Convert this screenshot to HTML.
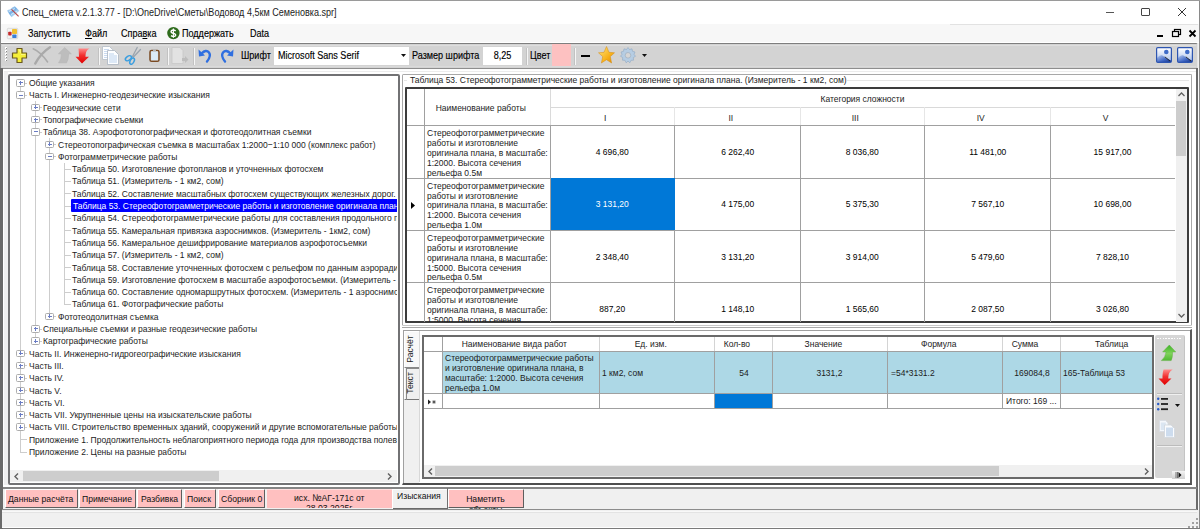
<!DOCTYPE html><html><head><meta charset="utf-8"><style>
*{margin:0;padding:0;box-sizing:border-box}
html,body{width:1200px;height:529px;overflow:hidden;background:#f0f0f0;font-family:"Liberation Sans",sans-serif;color:#1c1c1c}
div{position:absolute}
.t{white-space:nowrap;line-height:10px;height:10px;font-size:9.6px;transform:translateY(-4.8px) scaleX(.885);transform-origin:0 50%}
.t.c{transform-origin:50% 50%}
.s{white-space:nowrap;line-height:12px;height:12px;font-size:10.3px;transform:translateY(-6px) scaleX(.879);transform-origin:0 50%;color:#000!important;-webkit-text-stroke:.15px #000}
.s.c{transform-origin:50% 50%}
.ttl{-webkit-text-stroke:0;color:#222!important}
.c{text-align:center}
svg{position:absolute;overflow:visible}
</style></head><body>
<div style="left:0px;top:0px;width:1200px;height:24px;background:#fff"></div>
<div style="left:0px;top:24px;width:1200px;height:19px;background:#f7f7f7;border-bottom:1.5px solid #fff"></div>
<div style="left:950px;top:24px;width:248px;height:1px;background:#e2e2e2"></div>
<svg style="left:6px;top:5px" width="14" height="13" viewBox="0 0 14 13">
<defs><linearGradient id="tg" x1="0" y1="0" x2="1" y2="1"><stop offset="0" stop-color="#e4f0fb"/><stop offset=".45" stop-color="#5aa0e0"/><stop offset=".7" stop-color="#a8d4f4"/><stop offset="1" stop-color="#4a90d8"/></linearGradient></defs>
<path d="M1 5.5 Q3 4 4 4.5 Q6 2 8.8 1.2 Q10 2.5 13.5 6 Q11 7 10.5 8.5 Q8 10 5.5 12.2 Q3 9 1 5.5Z" fill="url(#tg)" opacity=".85"/>
<path d="M3 6.5Q6 5 9 3.5M5 9.5Q8 8 11 6" stroke="#f4faff" stroke-width=".9" fill="none" opacity=".8"/>
<path d="M5.5 4.3L12.6 11.4" stroke="#b84a4a" stroke-width="1.2"/></svg>
<div class="s ttl" style="left:21.5px;top:12.5px;">Спец_смета v.2.1.3.77 - [D:\OneDrive\Сметы\Водовод 4,5км Семеновка.spr]</div>
<div style="left:1106px;top:12px;width:8px;height:1px;background:#555"></div>
<div style="left:1141px;top:8px;width:9px;height:8px;border:1px solid #444;border-radius:1px"></div>
<svg style="left:1178px;top:8px" width="8" height="8" viewBox="0 0 8 8"><path d="M0 0L8 8M8 0L0 8" stroke="#333" stroke-width="1"/></svg>
<svg style="left:7px;top:28px" width="11" height="11" viewBox="0 0 11 11">
<rect x=".3" y=".3" width="10.4" height="10.4" rx="1" fill="#f2f2f2" stroke="#c8c8c8" stroke-width=".6"/>
<rect x="1.2" y="3.8" width="3.4" height="3.8" rx=".8" fill="#c42a2a"/>
<rect x="5" y="1" width="5" height="5" rx=".8" fill="#f0c030"/>
<rect x="5.3" y="6.6" width="4.2" height="3.4" rx=".6" fill="#3a7fd8"/></svg>
<div class="s" style="left:27.5px;top:33.5px;color:#1a1a1a">Запустить</div>
<div class="s" style="left:84.5px;top:33.5px;color:#1a1a1a"><u style="text-decoration-thickness:1px;text-underline-offset:1px">Ф</u>айл</div>
<div class="s" style="left:121px;top:33.5px;color:#1a1a1a">Спра<u style="text-decoration-thickness:1px;text-underline-offset:1px">в</u>ка</div>
<svg style="left:167px;top:27px" width="13" height="13" viewBox="0 0 13 13">
<circle cx="6.4" cy="6.1" r="6.2" fill="#2e6b1c"/>
<path d="M8.7 3.9Q6.4 2.4 4.5 3.6Q3.4 5 5.4 6L7.4 6.6Q9.3 7.6 8.2 9Q6.3 10.3 4 8.7" fill="none" stroke="#fff" stroke-width="1.5"/>
<path d="M6.4 1.6V10.8" stroke="#fff" stroke-width="1.1"/></svg>
<div class="s" style="left:182px;top:33.5px;color:#1a1a1a">Поддержать</div>
<div class="s" style="left:250px;top:33.5px;color:#1a1a1a">Data</div>
<div style="left:1157px;top:35px;width:6px;height:2px;background:#000"></div>
<svg style="left:1172px;top:29px" width="9" height="8" viewBox="0 0 9 8"><rect x="2.5" y=".5" width="6" height="5" fill="none" stroke="#000" stroke-width="1.2"/><rect x=".5" y="2.5" width="6" height="5" fill="#f2f2f2" stroke="#000" stroke-width="1.2"/></svg>
<svg style="left:1189px;top:30px" width="7" height="7" viewBox="0 0 7 7"><path d="M0.5 0.5L6.5 6.5M6.5 0.5L0.5 6.5" stroke="#000" stroke-width="1.8"/></svg>
<div style="left:1px;top:43px;width:1197px;height:26px;background:#d3d3d3;border-top:1px solid #7e7e7e;border-bottom:1px solid #8e8e8e;border-right:1px solid #e6e6e6;border-radius:0 2px 2px 0"></div>
<div style="left:2px;top:44.5px;width:1194px;height:1px;background:#dedede"></div>
<div style="left:2px;top:66px;width:1194px;height:1px;background:#dadada"></div>
<div style="left:2px;top:69.2px;width:1194px;height:2px;background:#fcfcfc"></div>
<div style="left:5px;top:47px;width:2px;height:2px;background:#fff"></div>
<div style="left:6px;top:48px;width:1px;height:1px;background:#8a8a8a"></div>
<div style="left:5px;top:50px;width:2px;height:2px;background:#fff"></div>
<div style="left:6px;top:51px;width:1px;height:1px;background:#8a8a8a"></div>
<div style="left:5px;top:53px;width:2px;height:2px;background:#fff"></div>
<div style="left:6px;top:54px;width:1px;height:1px;background:#8a8a8a"></div>
<div style="left:5px;top:56px;width:2px;height:2px;background:#fff"></div>
<div style="left:6px;top:57px;width:1px;height:1px;background:#8a8a8a"></div>
<div style="left:5px;top:59px;width:2px;height:2px;background:#fff"></div>
<div style="left:6px;top:60px;width:1px;height:1px;background:#8a8a8a"></div>
<svg style="left:12px;top:48px" width="15" height="15" viewBox="0 0 15 15">
<path d="M5 0.5H10V5H14.5V10H10V14.5H5V10H0.5V5H5Z" fill="#f5ef3a" stroke="#6b5a1e" stroke-width="1.2" stroke-linejoin="round"/>
<path d="M6 1.5H9V6H13.5V7H9V6Z" fill="#fffbb0" opacity=".6"/></svg>
<svg style="left:32px;top:46px" width="19" height="19" viewBox="0 0 19 19">
<path d="M1.2 2.8Q8.5 6 15.6 16" stroke="#ababab" stroke-width="1.5" fill="none" stroke-linecap="round"/>
<path d="M18 1.3Q9 7 3.2 17.6" stroke="#a9a9a9" stroke-width="2.3" fill="none" stroke-linecap="round"/></svg>
<svg style="left:58px;top:47px" width="14" height="17" viewBox="0 0 14 17">
<path d="M6.7 .6L13.3 6.8H10.6Q10.7 12.5 8.6 15.8H.6Q3.6 12 3.4 6.8H.4Z" fill="#bdbdbd" stroke="#b2b2b2" stroke-width=".5"/></svg>
<svg style="left:75px;top:48px" width="15" height="16" viewBox="0 0 15 16">
<defs><linearGradient id="rg" x1="0" y1="0" x2="0" y2="1"><stop offset="0" stop-color="#ff8c8c"/><stop offset=".45" stop-color="#f23030"/><stop offset="1" stop-color="#e00000"/></linearGradient></defs>
<path d="M3.5 .5H14.5Q10.3 2.5 10.5 8.8H14L7 15.5L.5 8.8H4Q3.8 3 3.5 .5Z" fill="url(#rg)"/></svg>
<div style="left:98px;top:48px;width:1px;height:17px;background:#c2c2c2"></div>
<div style="left:99px;top:48px;width:1px;height:17px;background:#f6f6f6"></div>
<div style="left:167px;top:48px;width:1px;height:17px;background:#c2c2c2"></div>
<div style="left:168px;top:48px;width:1px;height:17px;background:#f6f6f6"></div>
<div style="left:193px;top:48px;width:1px;height:17px;background:#c2c2c2"></div>
<div style="left:194px;top:48px;width:1px;height:17px;background:#f6f6f6"></div>
<div style="left:526px;top:48px;width:1px;height:17px;background:#c2c2c2"></div>
<div style="left:527px;top:48px;width:1px;height:17px;background:#f6f6f6"></div>
<div style="left:574px;top:48px;width:1px;height:17px;background:#c2c2c2"></div>
<div style="left:575px;top:48px;width:1px;height:17px;background:#f6f6f6"></div>
<svg style="left:102px;top:46px" width="17" height="19" viewBox="0 0 17 19">
<path d="M.5 .5H7.5L10.5 3.5V13.5H.5Z" fill="#fdfeff" stroke="#b4bcc6" stroke-width=".8"/>
<path d="M2 3.5H7M2 5.5H8.5M2 7.5H8.5M2 9.5H8.5M2 11.5H8.5" stroke="#c9daf0" stroke-width="1"/>
<path d="M5.5 4.5H12.5L16.5 8.5V18.5H5.5Z" fill="#fdfeff" stroke="#aab4c0" stroke-width=".8"/>
<path d="M7 8H12M7 10H15M7 12H15M7 14H15M7 16H15" stroke="#bcd2ee" stroke-width="1.1"/></svg>
<svg style="left:123px;top:46px" width="19" height="20" viewBox="0 0 19 20">
<path d="M9.5 10.5L14.2 1.5M10.2 11.2L17.5 3.5" stroke="#9aa4ae" stroke-width="1.3" stroke-linecap="round"/>
<ellipse cx="0" cy="0" rx="3.4" ry="2" transform="translate(5.4 12.2) rotate(-35)" fill="none" stroke="#3a9ee0" stroke-width="1.5"/>
<ellipse cx="0" cy="0" rx="3.4" ry="1.9" transform="translate(9.1 15.1) rotate(-62)" fill="none" stroke="#3a9ee0" stroke-width="1.5"/></svg>
<svg style="left:148.5px;top:49px" width="11" height="13" viewBox="0 0 11 13">
<rect x="1" y="1.5" width="9" height="10.8" rx="1.6" fill="none" stroke="#7a4a22" stroke-width="1.5"/>
<rect x="2.2" y="2.4" width="6.6" height="8.8" fill="#dcebf7"/>
<rect x="4" y=".2" width="3" height="2.2" fill="#b8b8b8"/></svg>
<svg style="left:171px;top:47px" width="18" height="18" viewBox="0 0 18 18">
<path d="M1 .5H9L12 3.5V16.5H1Z" fill="#e2e2e2" stroke="#c8c8c8" stroke-width=".8"/>
<path d="M11 11H14V9L17.5 12.5L14 16V14H11Z" fill="#bdbdbd"/></svg>
<svg style="left:198px;top:48px" width="14" height="15" viewBox="0 0 14 15">
<path d="M3.5 5.5 Q8 1 11 4.5 Q13.5 8 9 13.5" fill="none" stroke="#2f6fe0" stroke-width="2.4" stroke-linecap="round"/>
<path d="M0.5 1.5 L1 8.5 L7 7.5Z" fill="#2f6fe0"/></svg>
<svg style="left:220px;top:48px" width="14" height="15" viewBox="0 0 14 15">
<path d="M10.5 5.5 Q6 1 3 4.5 Q0.5 8 5 13.5" fill="none" stroke="#2f6fe0" stroke-width="2.4" stroke-linecap="round"/>
<path d="M13.5 1.5 L13 8.5 L7 7.5Z" fill="#2f6fe0"/></svg>
<div class="s" style="left:241px;top:55.5px;color:#111">Шрифт</div>
<div style="left:274px;top:47px;width:135px;height:18px;background:#fff"></div>
<div class="s" style="left:277.5px;top:56px;color:#111">Microsoft Sans Serif</div>
<svg style="left:401px;top:54px" width="6" height="4" viewBox="0 0 6 4"><path d="M0 0H5L2.5 3Z" fill="#111"/></svg>
<div class="s" style="left:412px;top:55.5px;color:#111">Размер шрифта</div>
<div style="left:483px;top:47px;width:39px;height:18px;background:#fff"></div>
<div class="s c" style="left:483px;top:56px;color:#111;width:39px">8,25</div>
<div class="s" style="left:530px;top:55.5px;color:#111">Цвет</div>
<div style="left:552px;top:44px;width:19px;height:22px;background:#fdc1c1"></div>
<div style="left:581px;top:55px;width:9px;height:2px;background:#000"></div>
<svg style="left:598px;top:46px" width="17" height="18" viewBox="0 0 17 18">
<defs><linearGradient id="sg" x1="0" y1="0" x2="1" y2="1"><stop offset="0" stop-color="#ffe680"/><stop offset=".6" stop-color="#f8b21c"/><stop offset="1" stop-color="#e08a00"/></linearGradient></defs>
<path d="M8.5 .5L11 6.3L16.5 6.8L12.3 10.6L13.6 17L8.5 13.7L3.4 17L4.7 10.6L.5 6.8L6 6.3Z" fill="url(#sg)" stroke="#d48a10" stroke-width=".5"/></svg>
<svg style="left:620px;top:47px" width="16" height="17" viewBox="0 0 16 17">
<path d="M8 .5L9.5 2.5L12 1.8L12.5 4.3L15 5L14 7.3L15.5 9.3L13.3 10.5L13.5 13.2L11 13.3L9.8 15.8L8 14L6.2 15.8L5 13.3L2.5 13.2L2.7 10.5L.5 9.3L2 7.3L1 5L3.5 4.3L4 1.8L6.5 2.5Z" fill="#b6cde3" stroke="#8fa8c2" stroke-width=".6"/>
<circle cx="8" cy="8.3" r="2.8" fill="#d6d6d6" stroke="#9ab" stroke-width=".6"/></svg>
<svg style="left:642px;top:54px" width="6" height="4" viewBox="0 0 6 4"><path d="M0 0H5L2.5 3Z" fill="#111"/></svg>
<svg style="left:1156px;top:47px" width="16" height="16" viewBox="0 0 16 16">
<defs><linearGradient id="ig1156" x1="0" y1="0" x2="0" y2="1"><stop offset="0" stop-color="#ffffff"/><stop offset="1" stop-color="#a8c0ea"/></linearGradient>
<linearGradient id="im1156" x1="0" y1="0" x2="1" y2="1"><stop offset="0" stop-color="#b8ccf0"/><stop offset=".6" stop-color="#3f66c4"/><stop offset="1" stop-color="#15348a"/></linearGradient></defs>
<rect x="1" y="1" width="14" height="14" fill="url(#ig1156)"/>
<circle cx="10.3" cy="5" r="2.3" fill="#3f6cc8"/>
<path d="M1 15V11Q3.5 7.5 6 8.3L9.3 10.6L15 13.5V15Z" fill="url(#im1156)"/>
<path d="M8.8 9.8L14 14" stroke="#222" stroke-width=".9"/>
<rect x=".6" y=".6" width="14.8" height="14.8" rx="1.2" fill="none" stroke="#2d55b0" stroke-width="1.2"/></svg>
<svg style="left:1177px;top:47px" width="16" height="16" viewBox="0 0 16 16">
<defs><linearGradient id="ig1177" x1="0" y1="0" x2="0" y2="1"><stop offset="0" stop-color="#ffffff"/><stop offset="1" stop-color="#a8c0ea"/></linearGradient>
<linearGradient id="im1177" x1="0" y1="0" x2="1" y2="1"><stop offset="0" stop-color="#b8ccf0"/><stop offset=".6" stop-color="#3f66c4"/><stop offset="1" stop-color="#15348a"/></linearGradient></defs>
<rect x="1" y="1" width="14" height="14" fill="url(#ig1177)"/>
<circle cx="10.3" cy="5" r="2.3" fill="#3f6cc8"/>
<path d="M1 15V11Q3.5 7.5 6 8.3L9.3 10.6L15 13.5V15Z" fill="url(#im1177)"/>
<path d="M8.8 9.8L14 14" stroke="#222" stroke-width=".9"/>
<rect x=".6" y=".6" width="14.8" height="14.8" rx="1.2" fill="none" stroke="#2d55b0" stroke-width="1.2"/></svg>
<div style="left:3px;top:70px;width:1193px;height:418px;background:#fff"></div>
<div style="left:4px;top:71.5px;width:4px;height:413px;background:#f0f0f0"></div>
<div style="left:4px;top:71.3px;width:1192px;height:1px;background:#ececec"></div>
<div style="left:0px;top:0px;width:1px;height:68px;background:#8a8a8a"></div>
<div style="left:1199px;top:0px;width:1px;height:529px;background:#8a8a8a"></div>
<div style="left:0px;top:0px;width:1200px;height:1px;background:#9a9a9a"></div>
<div style="left:0px;top:528.3px;width:1200px;height:1px;background:#7a7a7a"></div>
<div style="left:0px;top:68px;width:2.5px;height:461px;background:#6a6a6a"></div>
<div style="left:1196px;top:68px;width:1.6px;height:442px;background:#6a6a6a"></div>
<div style="left:1198px;top:68px;width:1px;height:442px;background:#fafafa"></div>
<div style="left:8px;top:74px;width:392px;height:411px;background:#fff;border:2px solid #727274;border-radius:2px"></div>
<div style="left:20px;top:82.5px;width:1px;height:369.0px;background:#cdcdcd"></div>
<div style="left:35px;top:101.1px;width:1px;height:239.70000000000002px;background:#cdcdcd"></div>
<div style="left:49px;top:138.0px;width:1px;height:178.20000000000005px;background:#cdcdcd"></div>
<div style="left:64px;top:162.60000000000002px;width:1px;height:141.29999999999995px;background:#cdcdcd"></div>
<div style="left:10px;top:76px;width:387px;height:394px;overflow:hidden">
<div style="left:10px;top:6.5px;width:7px;height:1px;background:#cdcdcd"></div>
<div style="left:6px;top:3.0px;width:8.5px;height:7.5px;background:#fff;border:1px solid #adadad;border-radius:1.5px"></div>
<div style="left:8.5px;top:6.2px;width:4px;height:1px;background:#6a7cc4"></div>
<div style="left:10px;top:4.7px;width:1px;height:4px;background:#6a7cc4"></div>
<div class="t" style="left:18.5px;top:7.0px">Общие указания</div>
<div style="left:10px;top:18.8px;width:7px;height:1px;background:#cdcdcd"></div>
<div style="left:6px;top:15.3px;width:8.5px;height:7.5px;background:#fff;border:1px solid #adadad;border-radius:1.5px"></div>
<div style="left:8.5px;top:18.5px;width:4px;height:1px;background:#6a7cc4"></div>
<div class="t" style="left:18.5px;top:19.3px">Часть I. Инженерно-геодезические изыскания</div>
<div style="left:25px;top:31.1px;width:7px;height:1px;background:#cdcdcd"></div>
<div style="left:21px;top:27.6px;width:8.5px;height:7.5px;background:#fff;border:1px solid #adadad;border-radius:1.5px"></div>
<div style="left:23.5px;top:30.8px;width:4px;height:1px;background:#6a7cc4"></div>
<div style="left:25px;top:29.3px;width:1px;height:4px;background:#6a7cc4"></div>
<div class="t" style="left:33.1px;top:31.6px">Геодезические сети</div>
<div style="left:25px;top:43.4px;width:7px;height:1px;background:#cdcdcd"></div>
<div style="left:21px;top:39.9px;width:8.5px;height:7.5px;background:#fff;border:1px solid #adadad;border-radius:1.5px"></div>
<div style="left:23.5px;top:43.1px;width:4px;height:1px;background:#6a7cc4"></div>
<div style="left:25px;top:41.6px;width:1px;height:4px;background:#6a7cc4"></div>
<div class="t" style="left:33.1px;top:43.9px">Топографические съемки</div>
<div style="left:25px;top:55.7px;width:7px;height:1px;background:#cdcdcd"></div>
<div style="left:21px;top:52.2px;width:8.5px;height:7.5px;background:#fff;border:1px solid #adadad;border-radius:1.5px"></div>
<div style="left:23.5px;top:55.4px;width:4px;height:1px;background:#6a7cc4"></div>
<div class="t" style="left:33.1px;top:56.2px">Таблица 38. Аэрофототопографическая и фототеодолитная съемки</div>
<div style="left:39px;top:68.0px;width:7px;height:1px;background:#cdcdcd"></div>
<div style="left:35px;top:64.5px;width:8.5px;height:7.5px;background:#fff;border:1px solid #adadad;border-radius:1.5px"></div>
<div style="left:37.5px;top:67.7px;width:4px;height:1px;background:#6a7cc4"></div>
<div style="left:39px;top:66.2px;width:1px;height:4px;background:#6a7cc4"></div>
<div class="t" style="left:47.7px;top:68.5px">Стереотопографическая съемка в масштабах 1:2000−1:10 000 (комплекс работ)</div>
<div style="left:39px;top:80.3px;width:7px;height:1px;background:#cdcdcd"></div>
<div style="left:35px;top:76.8px;width:8.5px;height:7.5px;background:#fff;border:1px solid #adadad;border-radius:1.5px"></div>
<div style="left:37.5px;top:80.0px;width:4px;height:1px;background:#6a7cc4"></div>
<div class="t" style="left:47.7px;top:80.8px">Фотограмметрические работы</div>
<div style="left:54px;top:92.6px;width:7px;height:1px;background:#cdcdcd"></div>
<div class="t" style="left:62.3px;top:93.1px">Таблица 50. Изготовление фотопланов и уточненных фотосхем</div>
<div style="left:54px;top:104.9px;width:7px;height:1px;background:#cdcdcd"></div>
<div class="t" style="left:62.3px;top:105.4px">Таблица 51. (Измеритель - 1 км2, сом)</div>
<div style="left:54px;top:117.2px;width:7px;height:1px;background:#cdcdcd"></div>
<div class="t" style="left:62.3px;top:117.7px">Таблица 52. Составление масштабных фотосхем существующих железных дорог. (Измеритель</div>
<div style="left:54px;top:129.5px;width:7px;height:1px;background:#cdcdcd"></div>
<div style="left:60.8px;top:123.1px;width:400px;height:12.7px;background:#0000ff;border-radius:1px"></div>
<div class="t" style="left:63.1px;top:130.0px;color:#fff">Таблица 53. Стереофотограмметрические работы и изготовление оригинала плана. (Измеритель</div>
<div style="left:54px;top:141.8px;width:7px;height:1px;background:#cdcdcd"></div>
<div class="t" style="left:62.3px;top:142.3px">Таблица 54. Стереофотограмметрические работы для составления продольного профиля</div>
<div style="left:54px;top:154.1px;width:7px;height:1px;background:#cdcdcd"></div>
<div class="t" style="left:62.3px;top:154.6px">Таблица 55. Камеральная привязка аэроснимков. (Измеритель - 1км2, сом)</div>
<div style="left:54px;top:166.4px;width:7px;height:1px;background:#cdcdcd"></div>
<div class="t" style="left:62.3px;top:166.9px">Таблица 56. Камеральное дешифрирование материалов аэрофотосъемки</div>
<div style="left:54px;top:178.7px;width:7px;height:1px;background:#cdcdcd"></div>
<div class="t" style="left:62.3px;top:179.2px">Таблица 57. (Измеритель - 1 км2, сом)</div>
<div style="left:54px;top:191.0px;width:7px;height:1px;background:#cdcdcd"></div>
<div class="t" style="left:62.3px;top:191.5px">Таблица 58. Составление уточненных фотосхем с рельефом по данным аэрорадионивелирования</div>
<div style="left:54px;top:203.3px;width:7px;height:1px;background:#cdcdcd"></div>
<div class="t" style="left:62.3px;top:203.8px">Таблица 59. Изготовление фотосхем в масштабе аэрофотосъемки. (Измеритель - 1 км2</div>
<div style="left:54px;top:215.6px;width:7px;height:1px;background:#cdcdcd"></div>
<div class="t" style="left:62.3px;top:216.1px">Таблица 60. Составление одномаршрутных фотосхем. (Измеритель - 1 аэроснимок</div>
<div style="left:54px;top:227.9px;width:7px;height:1px;background:#cdcdcd"></div>
<div class="t" style="left:62.3px;top:228.4px">Таблица 61. Фотографические работы</div>
<div style="left:39px;top:240.2px;width:7px;height:1px;background:#cdcdcd"></div>
<div style="left:35px;top:236.7px;width:8.5px;height:7.5px;background:#fff;border:1px solid #adadad;border-radius:1.5px"></div>
<div style="left:37.5px;top:239.9px;width:4px;height:1px;background:#6a7cc4"></div>
<div style="left:39px;top:238.4px;width:1px;height:4px;background:#6a7cc4"></div>
<div class="t" style="left:47.7px;top:240.7px">Фототеодолитная съемка</div>
<div style="left:25px;top:252.5px;width:7px;height:1px;background:#cdcdcd"></div>
<div style="left:21px;top:249.0px;width:8.5px;height:7.5px;background:#fff;border:1px solid #adadad;border-radius:1.5px"></div>
<div style="left:23.5px;top:252.2px;width:4px;height:1px;background:#6a7cc4"></div>
<div style="left:25px;top:250.7px;width:1px;height:4px;background:#6a7cc4"></div>
<div class="t" style="left:33.1px;top:253.0px">Специальные съемки и разные геодезические работы</div>
<div style="left:25px;top:264.8px;width:7px;height:1px;background:#cdcdcd"></div>
<div style="left:21px;top:261.3px;width:8.5px;height:7.5px;background:#fff;border:1px solid #adadad;border-radius:1.5px"></div>
<div style="left:23.5px;top:264.5px;width:4px;height:1px;background:#6a7cc4"></div>
<div style="left:25px;top:263.0px;width:1px;height:4px;background:#6a7cc4"></div>
<div class="t" style="left:33.1px;top:265.3px">Картографические работы</div>
<div style="left:10px;top:277.1px;width:7px;height:1px;background:#cdcdcd"></div>
<div style="left:6px;top:273.6px;width:8.5px;height:7.5px;background:#fff;border:1px solid #adadad;border-radius:1.5px"></div>
<div style="left:8.5px;top:276.8px;width:4px;height:1px;background:#6a7cc4"></div>
<div style="left:10px;top:275.3px;width:1px;height:4px;background:#6a7cc4"></div>
<div class="t" style="left:18.5px;top:277.6px">Часть II. Инженерно-гидрогеографические изыскания</div>
<div style="left:10px;top:289.4px;width:7px;height:1px;background:#cdcdcd"></div>
<div style="left:6px;top:285.9px;width:8.5px;height:7.5px;background:#fff;border:1px solid #adadad;border-radius:1.5px"></div>
<div style="left:8.5px;top:289.1px;width:4px;height:1px;background:#6a7cc4"></div>
<div style="left:10px;top:287.6px;width:1px;height:4px;background:#6a7cc4"></div>
<div class="t" style="left:18.5px;top:289.9px">Часть III.</div>
<div style="left:10px;top:301.7px;width:7px;height:1px;background:#cdcdcd"></div>
<div style="left:6px;top:298.2px;width:8.5px;height:7.5px;background:#fff;border:1px solid #adadad;border-radius:1.5px"></div>
<div style="left:8.5px;top:301.4px;width:4px;height:1px;background:#6a7cc4"></div>
<div style="left:10px;top:299.9px;width:1px;height:4px;background:#6a7cc4"></div>
<div class="t" style="left:18.5px;top:302.2px">Часть IV.</div>
<div style="left:10px;top:314.0px;width:7px;height:1px;background:#cdcdcd"></div>
<div style="left:6px;top:310.5px;width:8.5px;height:7.5px;background:#fff;border:1px solid #adadad;border-radius:1.5px"></div>
<div style="left:8.5px;top:313.7px;width:4px;height:1px;background:#6a7cc4"></div>
<div style="left:10px;top:312.2px;width:1px;height:4px;background:#6a7cc4"></div>
<div class="t" style="left:18.5px;top:314.5px">Часть V.</div>
<div style="left:10px;top:326.3px;width:7px;height:1px;background:#cdcdcd"></div>
<div style="left:6px;top:322.8px;width:8.5px;height:7.5px;background:#fff;border:1px solid #adadad;border-radius:1.5px"></div>
<div style="left:8.5px;top:326.0px;width:4px;height:1px;background:#6a7cc4"></div>
<div style="left:10px;top:324.5px;width:1px;height:4px;background:#6a7cc4"></div>
<div class="t" style="left:18.5px;top:326.8px">Часть VI.</div>
<div style="left:10px;top:338.6px;width:7px;height:1px;background:#cdcdcd"></div>
<div style="left:6px;top:335.1px;width:8.5px;height:7.5px;background:#fff;border:1px solid #adadad;border-radius:1.5px"></div>
<div style="left:8.5px;top:338.3px;width:4px;height:1px;background:#6a7cc4"></div>
<div style="left:10px;top:336.8px;width:1px;height:4px;background:#6a7cc4"></div>
<div class="t" style="left:18.5px;top:339.1px">Часть VII. Укрупненные цены на изыскательские работы</div>
<div style="left:10px;top:350.9px;width:7px;height:1px;background:#cdcdcd"></div>
<div style="left:6px;top:347.4px;width:8.5px;height:7.5px;background:#fff;border:1px solid #adadad;border-radius:1.5px"></div>
<div style="left:8.5px;top:350.6px;width:4px;height:1px;background:#6a7cc4"></div>
<div style="left:10px;top:349.1px;width:1px;height:4px;background:#6a7cc4"></div>
<div class="t" style="left:18.5px;top:351.4px">Часть VIII. Строительство временных зданий, сооружений и другие вспомогательные работы</div>
<div style="left:10px;top:363.2px;width:7px;height:1px;background:#cdcdcd"></div>
<div class="t" style="left:18.5px;top:363.7px">Приложение 1. Продолжительность неблагоприятного периода года для производства полевых работ</div>
<div style="left:10px;top:375.5px;width:7px;height:1px;background:#cdcdcd"></div>
<div class="t" style="left:18.5px;top:376.0px">Приложение 2. Цены на разные работы</div>
</div>
<div style="left:10px;top:470px;width:387px;height:12px;background:#f0f0f0"></div>
<div style="left:23px;top:471px;width:196px;height:10px;background:#cdcdcd"></div>
<svg style="left:14px;top:473px" width="5" height="7" viewBox="0 0 5 7"><path d="M4 .5L1 3.5L4 6.5" fill="none" stroke="#606060" stroke-width="1.4"/></svg>
<svg style="left:387px;top:473px" width="5" height="7" viewBox="0 0 5 7"><path d="M1 .5L4 3.5L1 6.5" fill="none" stroke="#606060" stroke-width="1.4"/></svg>
<div style="left:402px;top:74px;width:790px;height:252px;background:#fff;border:1px solid #a8a8a8;border-bottom-color:#c8c8c8;border-radius:1.5px"></div>
<div style="left:403.5px;top:79.5px;width:785.5px;height:1px;background:#e6e6e6"></div>
<div style="left:407px;top:76px;width:440px;height:8px;background:#fff"></div>
<div class="t" style="left:410px;top:80px;">Таблица 53. Стереофотограмметрические работы и изготовление оригинала плана. (Измеритель - 1 км2, сом)</div>
<div style="left:405px;top:87px;width:784px;height:236px;background:#fff;border:2px solid #3c3c3c;border-radius:1px"></div>
<div style="left:550px;top:107px;width:625px;height:1px;background:#d9d9d9"></div>
<div style="left:406.5px;top:125.3px;width:768.5px;height:1px;background:#a0a0a0"></div>
<div style="left:424px;top:88.5px;width:1px;height:233px;background:#a0a0a0"></div>
<div style="left:550px;top:88.5px;width:1px;height:36.8px;background:#dadada"></div>
<div style="left:550px;top:125.3px;width:1px;height:196.7px;background:#a0a0a0"></div>




<div style="left:674.0px;top:107px;width:1px;height:18.299999999999997px;background:#e6e6e6"></div>
<div style="left:674.0px;top:125.3px;width:1px;height:196.7px;background:#a0a0a0"></div>
<div style="left:799.5px;top:107px;width:1px;height:18.299999999999997px;background:#e6e6e6"></div>
<div style="left:799.5px;top:125.3px;width:1px;height:196.7px;background:#a0a0a0"></div>
<div style="left:924.0px;top:107px;width:1px;height:18.299999999999997px;background:#e6e6e6"></div>
<div style="left:924.0px;top:125.3px;width:1px;height:196.7px;background:#a0a0a0"></div>
<div style="left:1049.5px;top:107px;width:1px;height:18.299999999999997px;background:#e6e6e6"></div>
<div style="left:1049.5px;top:125.3px;width:1px;height:196.7px;background:#a0a0a0"></div>
<div style="left:406.5px;top:177.7px;width:768.5px;height:1px;background:#a0a0a0"></div>
<div style="left:406.5px;top:230px;width:768.5px;height:1px;background:#a0a0a0"></div>
<div style="left:406.5px;top:282.3px;width:768.5px;height:1px;background:#a0a0a0"></div>
<div class="t c" style="left:417.5px;top:108px;width:125.5px">Наименование работы</div>
<div class="t c" style="left:550px;top:98.5px;width:625px">Категория сложности</div>
<div class="t c" style="left:543px;top:118.3px;width:124.5px">I</div>
<div class="t c" style="left:667.5px;top:118.3px;width:125.5px">II</div>
<div class="t c" style="left:793px;top:118.3px;width:124.5px">III</div>
<div class="t c" style="left:917.5px;top:118.3px;width:125.5px">IV</div>
<div class="t c" style="left:1043px;top:118.3px;width:125px">V</div>
<div style="left:406.5px;top:88.5px;width:768.5px;height:233px;overflow:hidden">
<div class="t" style="left:20.5px;top:44.8px">Стереофотограмметрические</div>
<div class="t" style="left:20.5px;top:54.7px">работы и изготовление</div>
<div class="t" style="left:20.5px;top:64.5px">оригинала плана, в масштабе:</div>
<div class="t" style="left:20.5px;top:74.4px">1:2000. Высота сечения</div>
<div class="t" style="left:20.5px;top:84.2px">рельефа 0.5м</div>
<div class="t c" style="left:143.5px;top:63.3px;width:124.5px;color:#000">4 696,80</div>
<div class="t c" style="left:268.0px;top:63.3px;width:125.5px;color:#000">6 262,40</div>
<div class="t c" style="left:393.5px;top:63.3px;width:124.5px;color:#000">8 036,80</div>
<div class="t c" style="left:518.0px;top:63.3px;width:125.5px;color:#000">11 481,00</div>
<div class="t c" style="left:643.5px;top:63.3px;width:125px;color:#000">15 917,00</div>
<div style="left:144.0px;top:89.69999999999999px;width:124px;height:51.80000000000001px;background:#0078d7"></div>
<div class="t" style="left:20.5px;top:97.2px">Стереофотограмметрические</div>
<div class="t" style="left:20.5px;top:107.0px">работы и изготовление</div>
<div class="t" style="left:20.5px;top:116.9px">оригинала плана, в масштабе:</div>
<div class="t" style="left:20.5px;top:126.8px">1:2000. Высота сечения</div>
<div class="t" style="left:20.5px;top:136.6px">рельефа 1.0м</div>
<div class="t c" style="left:143.5px;top:115.7px;width:124.5px;color:#fff">3 131,20</div>
<div class="t c" style="left:268.0px;top:115.7px;width:125.5px;color:#000">4 175,00</div>
<div class="t c" style="left:393.5px;top:115.7px;width:124.5px;color:#000">5 375,30</div>
<div class="t c" style="left:518.0px;top:115.7px;width:125.5px;color:#000">7 567,10</div>
<div class="t c" style="left:643.5px;top:115.7px;width:125px;color:#000">10 698,00</div>
<div class="t" style="left:20.5px;top:149.5px">Стереофотограмметрические</div>
<div class="t" style="left:20.5px;top:159.3px">работы и изготовление</div>
<div class="t" style="left:20.5px;top:169.2px">оригинала плана, в масштабе:</div>
<div class="t" style="left:20.5px;top:179.1px">1:5000. Высота сечения</div>
<div class="t" style="left:20.5px;top:188.9px">рельефа 0.5м</div>
<div class="t c" style="left:143.5px;top:168.0px;width:124.5px;color:#000">2 348,40</div>
<div class="t c" style="left:268.0px;top:168.0px;width:125.5px;color:#000">3 131,20</div>
<div class="t c" style="left:393.5px;top:168.0px;width:124.5px;color:#000">3 914,00</div>
<div class="t c" style="left:518.0px;top:168.0px;width:125.5px;color:#000">5 479,60</div>
<div class="t c" style="left:643.5px;top:168.0px;width:125px;color:#000">7 828,10</div>
<div class="t" style="left:20.5px;top:201.8px">Стереофотограмметрические</div>
<div class="t" style="left:20.5px;top:211.7px">работы и изготовление</div>
<div class="t" style="left:20.5px;top:221.5px">оригинала плана, в масштабе:</div>
<div class="t" style="left:20.5px;top:231.4px">1:5000. Высота сечения</div>
<div class="t" style="left:20.5px;top:241.2px">рельефа 1.0м</div>
<div class="t c" style="left:143.5px;top:220.3px;width:124.5px;color:#000">887,20</div>
<div class="t c" style="left:268.0px;top:220.3px;width:125.5px;color:#000">1 148,10</div>
<div class="t c" style="left:393.5px;top:220.3px;width:124.5px;color:#000">1 565,60</div>
<div class="t c" style="left:518.0px;top:220.3px;width:125.5px;color:#000">2 087,50</div>
<div class="t c" style="left:643.5px;top:220.3px;width:125px;color:#000">3 026,80</div>
</div>
<svg style="left:411px;top:202px" width="4" height="7" viewBox="0 0 4 7"><path d="M0 0L4 3.5L0 7Z" fill="#000"/></svg>
<div style="left:1175.5px;top:88.5px;width:11.5px;height:233px;background:#f0f0f0"></div>
<div style="left:1176px;top:101px;width:10px;height:55px;background:#cdcdcd"></div>
<svg style="left:1178px;top:92px" width="7" height="5" viewBox="0 0 7 5"><path d="M.5 4L3.5 1L6.5 4" fill="none" stroke="#606060" stroke-width="1.3"/></svg>
<svg style="left:1178px;top:313px" width="7" height="5" viewBox="0 0 7 5"><path d="M.5 1L3.5 4L6.5 1" fill="none" stroke="#606060" stroke-width="1.3"/></svg>
<div style="left:402px;top:327px;width:790px;height:1px;background:#a8a8a8"></div>
<div style="left:402px;top:329px;width:790px;height:156px;border:1px solid #fff;border-right:2px solid #5a5a5a;border-bottom:2px solid #4e4e4e"></div>
<div style="left:403px;top:330px;width:787px;height:153px;border-left:1px solid #a0a0a0;border-top:1px solid #a0a0a0;background:#f0f0f0"></div>
<div style="left:419px;top:331px;width:771px;height:152px;background:#fff"></div>
<div style="left:403.5px;top:331px;width:15.5px;height:37px;background:#f8f8f8;border-left:1px solid #fff;border-top:1px solid #fff;border-bottom:1px solid #888"></div>
<div style="left:404px;top:367.5px;width:15px;height:32.5px;background:#f0f0f0;border-left:1px solid #fff;border-bottom:1px solid #777"></div>
<div style="left:405.5px;top:368px;width:1px;height:31.5px;background:#8a8a8a"></div>
<div style="left:405.5px;top:367.5px;width:13.5px;height:1px;background:#8a8a8a"></div>
<div class="t" style="left:409.7px;top:349.3px;transform:translate(-50%,-50%) rotate(-90deg);transform-origin:50% 50%;font-size:8.6px">Расчёт</div>
<div class="t" style="left:409.7px;top:383.3px;transform:translate(-50%,-50%) rotate(-90deg);transform-origin:50% 50%;font-size:8.6px">Текст</div>
<div style="left:419px;top:331px;width:1px;height:151px;background:#d8d8d8"></div>
<div style="left:422px;top:335px;width:732px;height:144px;background:#fff;border:2px solid #6a6a6a"></div>
<div style="left:442.8px;top:351.2px;width:709.2px;height:42.10000000000002px;background:#add8e6"></div>
<div style="left:715px;top:393.8px;width:57px;height:14.5px;background:#0078d7"></div>
<div style="left:441.8px;top:336.5px;width:1px;height:14.199999999999989px;background:#a0a0a0"></div>
<div style="left:441.8px;top:350.7px;width:1px;height:57.60000000000002px;background:#a0a0a0"></div>
<div style="left:598.5px;top:336.5px;width:1px;height:14.199999999999989px;background:#d4d4d4"></div>
<div style="left:598.5px;top:350.7px;width:1px;height:57.60000000000002px;background:#a0a0a0"></div>
<div style="left:714.0px;top:336.5px;width:1px;height:14.199999999999989px;background:#d4d4d4"></div>
<div style="left:714.0px;top:350.7px;width:1px;height:57.60000000000002px;background:#a0a0a0"></div>
<div style="left:771.8px;top:336.5px;width:1px;height:14.199999999999989px;background:#d4d4d4"></div>
<div style="left:771.8px;top:350.7px;width:1px;height:57.60000000000002px;background:#a0a0a0"></div>
<div style="left:886.6px;top:336.5px;width:1px;height:14.199999999999989px;background:#d4d4d4"></div>
<div style="left:886.6px;top:350.7px;width:1px;height:57.60000000000002px;background:#a0a0a0"></div>
<div style="left:1002.1px;top:336.5px;width:1px;height:14.199999999999989px;background:#d4d4d4"></div>
<div style="left:1002.1px;top:350.7px;width:1px;height:57.60000000000002px;background:#a0a0a0"></div>
<div style="left:1060.1px;top:336.5px;width:1px;height:14.199999999999989px;background:#d4d4d4"></div>
<div style="left:1060.1px;top:350.7px;width:1px;height:57.60000000000002px;background:#a0a0a0"></div>
<div style="left:424px;top:350.7px;width:728px;height:1px;background:#a0a0a0"></div>
<div style="left:424px;top:393.3px;width:728px;height:1px;background:#a0a0a0"></div>
<div style="left:424px;top:408.3px;width:728px;height:1px;background:#a0a0a0"></div>
<div class="t c" style="left:435.8px;top:343.5px;width:156.7px">Наименование вида работ</div>
<div class="t c" style="left:592.5px;top:343.5px;width:115.5px">Ед. изм.</div>
<div class="t c" style="left:708.0px;top:343.5px;width:57.799999999999955px">Кол-во</div>
<div class="t c" style="left:765.8px;top:343.5px;width:114.80000000000007px">Значение</div>
<div class="t c" style="left:880.6px;top:343.5px;width:115.5px">Формула</div>
<div class="t c" style="left:996.1px;top:343.5px;width:57.999999999999886px">Сумма</div>
<div class="t c" style="left:1066.1px;top:343.5px;width:91.40000000000009px">Таблица</div>
<div class="t" style="left:445px;top:357.8px;">Стереофотограмметрические работы</div>
<div class="t" style="left:445px;top:367.90000000000003px;">и изготовление оригинала плана, в</div>
<div class="t" style="left:445px;top:378.0px;">масштабе: 1:2000. Высота сечения</div>
<div class="t" style="left:445px;top:388.1px;">рельефа 1.0м</div>
<div class="t" style="left:601.5px;top:373px;">1 км2, сом</div>
<div class="t c" style="left:714.5px;top:373px;width:57.8px">54</div>
<div class="t c" style="left:772.3px;top:373px;width:114.8px">3131,2</div>
<div class="t" style="left:890.5px;top:373px;">=54*3131.2</div>
<div class="t c" style="left:1002.6px;top:373px;width:58px">169084,8</div>
<div class="t" style="left:1063px;top:373px;">165-Таблица 53</div>
<div class="t" style="left:1005.5px;top:401px;">Итого: 169 ...</div>
<svg style="left:428px;top:398.5px" width="9" height="6" viewBox="0 0 9 6"><path d="M0 .5L3 3L0 5.5Z" fill="#222"/><path d="M6 1.2V4.8M4.4 2.1L7.6 3.9M4.4 3.9L7.6 2.1" stroke="#333" stroke-width=".8"/></svg>
<div style="left:424px;top:465px;width:728px;height:12px;background:#f0f0f0"></div>
<div style="left:435px;top:466px;width:564px;height:10px;background:#cdcdcd"></div>
<svg style="left:428px;top:468px" width="5" height="7" viewBox="0 0 5 7"><path d="M4 .5L1 3.5L4 6.5" fill="none" stroke="#606060" stroke-width="1.4"/></svg>
<svg style="left:1144px;top:468px" width="5" height="7" viewBox="0 0 5 7"><path d="M1 .5L4 3.5L1 6.5" fill="none" stroke="#606060" stroke-width="1.4"/></svg>
<div style="left:1155px;top:334.5px;width:30px;height:143px;background:#d6d6d6;border-radius:2px;border-right:1px solid #c4c4c4"></div>
<div style="left:1157.0px;top:337.5px;width:1.6px;height:1.6px;background:#fff"></div>
<div style="left:1159.8px;top:337.5px;width:1.6px;height:1.6px;background:#fff"></div>
<div style="left:1162.6px;top:337.5px;width:1.6px;height:1.6px;background:#fff"></div>
<div style="left:1165.4px;top:337.5px;width:1.6px;height:1.6px;background:#fff"></div>
<div style="left:1168.2px;top:337.5px;width:1.6px;height:1.6px;background:#fff"></div>
<div style="left:1171.0px;top:337.5px;width:1.6px;height:1.6px;background:#fff"></div>
<div style="left:1173.8px;top:337.5px;width:1.6px;height:1.6px;background:#fff"></div>
<div style="left:1176.6px;top:337.5px;width:1.6px;height:1.6px;background:#fff"></div>
<div style="left:1179.4px;top:337.5px;width:1.6px;height:1.6px;background:#fff"></div>
<svg style="left:1160px;top:344px" width="17" height="18" viewBox="0 0 17 18">
<defs><linearGradient id="gg" x1="0" y1="0" x2="0" y2="1"><stop offset="0" stop-color="#3fb52a"/><stop offset=".55" stop-color="#7fd25a"/><stop offset="1" stop-color="#4fb832"/></linearGradient></defs>
<path d="M9.3 1L15.8 8H12.6Q12.6 14 11.2 16.6H1.3Q5.6 13 6 8H2.6Z" fill="url(#gg)" stroke="#5aa83a" stroke-width=".4"/></svg>
<svg style="left:1158px;top:369px" width="16" height="17" viewBox="0 0 16 17">
<defs><linearGradient id="rg2" x1="0" y1="0" x2="0" y2="1"><stop offset="0" stop-color="#ff8c8c"/><stop offset=".45" stop-color="#f23030"/><stop offset="1" stop-color="#e00000"/></linearGradient></defs>
<path d="M5.6 .6H14.7Q10 3 10.2 9.6H13.5L6.7 16L.5 9.6H4.5Q4.4 3.5 5.6 .6Z" fill="url(#rg2)"/></svg>
<div style="left:1157px;top:392.5px;width:25px;height:1px;background:#bcbcbc"></div>
<div style="left:1157px;top:393.5px;width:25px;height:1px;background:#f0f0f0"></div>
<svg style="left:1157px;top:397px" width="24" height="14" viewBox="0 0 24 14">
<circle cx="1.2" cy="1.8" r="1.2" fill="#2a5cc8"/><circle cx="1.2" cy="7" r="1.2" fill="#2a5cc8"/><circle cx="1.2" cy="12.2" r="1.2" fill="#2a5cc8"/>
<rect x="4" y="1" width="7" height="1.8" fill="#222"/><rect x="4" y="6.1" width="7" height="1.8" fill="#222"/><rect x="4" y="11.3" width="7" height="1.8" fill="#222"/>
<path d="M18 7H23L20.5 10Z" fill="#111"/></svg>
<svg style="left:1159px;top:420px" width="16" height="18" viewBox="0 0 16 18">
<path d="M0.5 0.5H6.5L9 3V11.5H0.5Z" fill="#f4f7fb" stroke="#d6dbe2" stroke-width=".8"/>
<rect x="1.8" y="2.5" width="5" height="7.5" fill="#dbe6f2"/>
<path d="M5.5 5H12L15.5 8.5V17.5H5.5Z" fill="#fbfcfe" stroke="#cfd5dd" stroke-width=".8"/>
<rect x="7" y="7.5" width="7" height="9" fill="#cddcee"/></svg>
<div style="left:1157px;top:444.5px;width:25px;height:1px;background:#bcbcbc"></div>
<div style="left:1157px;top:445.5px;width:25px;height:1px;background:#f0f0f0"></div>
<div style="left:1172px;top:471px;width:13px;height:8px;background:linear-gradient(#f4f4f4,#cfcfcf)"></div>
<svg style="left:1176px;top:472px" width="6" height="6" viewBox="0 0 6 6"><path d="M0 0V6M1.5 0V6" stroke="#555" stroke-width=".8"/><path d="M2.5 0L5.5 3L2.5 6Z" fill="#111"/></svg>
<div style="left:3px;top:487px;width:1194px;height:1.9px;background:#858585"></div>
<div style="left:5px;top:489px;width:72.5px;height:18.5px;background:#ffc0c0;border-left:1px solid #fff;border-top:1px solid #fff;border-right:1px solid #5e5e5e;border-bottom:1px solid #5e5e5e"></div>
<div style="left:79px;top:489px;width:56.5px;height:18.5px;background:#ffc0c0;border-left:1px solid #fff;border-top:1px solid #fff;border-right:1px solid #5e5e5e;border-bottom:1px solid #5e5e5e"></div>
<div style="left:136.5px;top:489px;width:45.5px;height:18.5px;background:#ffc0c0;border-left:1px solid #fff;border-top:1px solid #fff;border-right:1px solid #5e5e5e;border-bottom:1px solid #5e5e5e"></div>
<div style="left:183.5px;top:489px;width:32.0px;height:18.5px;background:#ffc0c0;border-left:1px solid #fff;border-top:1px solid #fff;border-right:1px solid #5e5e5e;border-bottom:1px solid #5e5e5e"></div>
<div style="left:217.5px;top:489px;width:47.5px;height:18.5px;background:#ffc0c0;border-left:1px solid #fff;border-top:1px solid #fff;border-right:1px solid #5e5e5e;border-bottom:1px solid #5e5e5e"></div>
<div style="left:267px;top:489px;width:124.5px;height:18.5px;background:#ffc0c0;border-top:1px solid #ffe0e0"></div>
<div style="left:448px;top:489px;width:75.5px;height:18.5px;background:#ffc0c0;border-left:1px solid #fff;border-top:1px solid #fff;border-right:1px solid #5e5e5e;border-bottom:1px solid #5e5e5e"></div>
<div class="t" style="left:7.5px;top:498.5px;font-size:9.75px;color:#111">Данные расчёта</div>
<div class="t" style="left:82px;top:498.5px;font-size:9.75px;color:#111">Примечание</div>
<div class="t" style="left:140.5px;top:498.5px;font-size:9.75px;color:#111">Разбивка</div>
<div class="t" style="left:187px;top:498.5px;font-size:9.75px;color:#111">Поиск</div>
<div class="t" style="left:220.5px;top:498.5px;font-size:9.75px;color:#111">Сборник 0</div>
<div style="left:267px;top:489px;width:124.5px;height:18.5px;overflow:hidden">
<div class="t c" style="left:0;top:9px;width:124.5px;font-size:9.75px;color:#111">исх. №АГ-171с от</div>
<div class="t c" style="left:0;top:19px;width:124.5px;font-size:9.75px;color:#111">28.03.2025г</div>
</div>
<div style="left:392px;top:488.7px;width:55.5px;height:20.5px;background:#f0f0f0;border-left:1px solid #fff;border-top:1px solid #fff;border-right:1px solid #fff;border-bottom:1px solid #fff"></div>
<div style="left:447.3px;top:487.5px;width:1.2px;height:22.0px;background:#707070"></div>
<div style="left:392.5px;top:508.3px;width:55.0px;height:1.3px;background:#6a6a6a"></div>
<div class="t" style="left:397.3px;top:496px;font-size:9.75px;color:#111">Изыскания</div>
<div style="left:448px;top:489px;width:75px;height:19.5px;overflow:hidden">
<div class="t c" style="left:0;top:10px;width:75px;font-size:9.75px;color:#111">Наметить</div>
<div class="t c" style="left:0;top:20.5px;width:75px;font-size:9.75px;color:#111">объекты</div>
</div>
<div style="left:2px;top:510px;width:1196px;height:18px;background:#f0f0f0"></div>
<div style="left:2px;top:509.1px;width:1195px;height:1.2px;background:#8c8c8c"></div>
<div style="left:2px;top:510.5px;width:1195px;height:1px;background:#f8f8f8"></div>
<div style="left:2px;top:512.2px;width:1195px;height:1px;background:#e3e3e3"></div>
<div style="left:2px;top:527px;width:1195px;height:1px;background:#fdfdfd"></div>
<div style="left:1196px;top:518px;width:1.6px;height:1.6px;background:#a0a0a0"></div>
<div style="left:1192px;top:522px;width:1.6px;height:1.6px;background:#a0a0a0"></div>
<div style="left:1196px;top:522px;width:1.6px;height:1.6px;background:#a0a0a0"></div>
<div style="left:1188px;top:526px;width:1.6px;height:1.6px;background:#a0a0a0"></div>
<div style="left:1192px;top:526px;width:1.6px;height:1.6px;background:#a0a0a0"></div>
<div style="left:1196px;top:526px;width:1.6px;height:1.6px;background:#a0a0a0"></div>
</body></html>
